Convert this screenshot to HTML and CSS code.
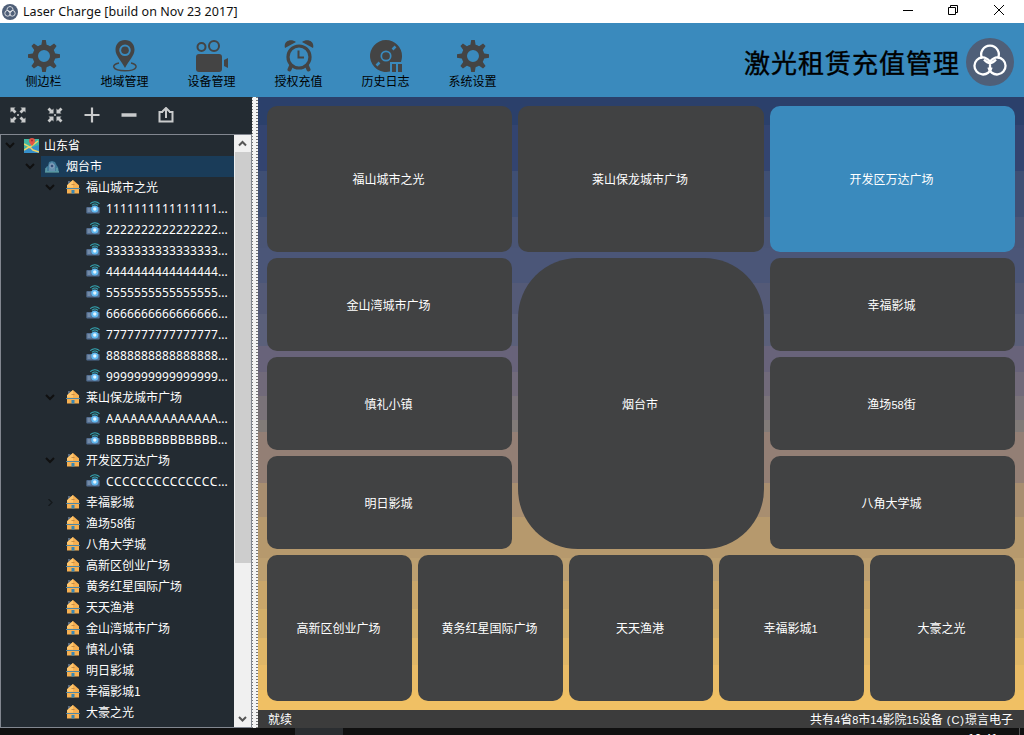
FILE: index.html
```html
<!DOCTYPE html>
<html lang="zh-CN">
<head>
<meta charset="utf-8">
<title>Laser Charge</title>
<link rel="stylesheet" href="styles.css">
</head>
<body>
<svg class="defs" width="0" height="0">
  <symbol id="logo" viewBox="0 0 48 48">
    <circle cx="24" cy="24" r="24" fill="#4f5f78"/>
    <g fill="none" stroke="#fff" stroke-width="2.3">
      <path d="M16.200 20.500A8.800 8.800 0 1 1 31.800 20.500"/>
      <path d="M25.500 29.500A8.600 8.600 0 1 1 16.500 19.300Q20 19 24 23.500"/>
      <path d="M22.500 29.500A8.600 8.600 0 1 0 31.500 19.300Q28 19 24 23.500"/>
      <path d="M18 21.500Q21 25 24 25t6-3.500M24 23v7"/>
    </g>
  </symbol>
  <symbol id="gear" viewBox="0 0 32 32">
    <g fill="#444">
      <g id="teeth"><path d="M14.200 0h3.600l1 6h-5.600zM14.200 32h3.600l1-6h-5.600z"/><path d="M0 14.200v3.600l6 1v-5.600zM32 14.200v3.600l-6 1v-5.600z"/></g>
      <use href="#teeth" transform="rotate(45 16 16)"/>
    </g>
    <circle cx="16" cy="16" r="8.700" fill="none" stroke="#444" stroke-width="5.400"/>
  </symbol>
  <symbol id="house" viewBox="0 0 14 14">
    <path d="M2 1h2.500v4H2z" fill="#596b80"/>
    <path d="M7 0l6 5.200v8.300H1V5.200z" fill="#f6b052"/>
    <path d="M7 0L1 5.200v2.300h6z" fill="#ffc66d"/>
    <path d="M0 8.500h14" stroke="#4e86a5" stroke-width="1"/>
    <path d="M5.500 4.500h3" stroke="#b98243" stroke-width=".8"/>
    <path d="M5.500 10h3v3.500h-3z" fill="#3987b5"/>
  </symbol>
  <symbol id="device" viewBox="0 0 14 14">
    <path d="M4.200 2.600Q9 -1.200 13.500 2.600M5.900 4.300Q9 1.700 12 4.300" fill="none" stroke="#35a9b6" stroke-width="1.1"/>
    <rect x=".3" y="6" width="13.400" height="6.500" rx="1" fill="#536e91"/>
    <path d="M1.500 8h3M1.500 10h3" stroke="#a7b8ca" stroke-width=".8"/>
    <circle cx="8.800" cy="8" r="3.600" fill="#61baf2"/><circle cx="8.800" cy="8" r="1.700" fill="#e1f5ff"/>
  </symbol>
  <symbol id="down" viewBox="0 0 10 7"><path d="M1 1l4 4 4-4" fill="none" stroke="#101010" stroke-width="2"/></symbol>
</svg>

<header class="titlebar">
  <svg class="app-icon"><use href="#logo"/></svg>
  <span class="caption">Laser Charge [build on Nov 23 2017]</span>
  <svg class="window-buttons" viewBox="0 0 104 14" fill="none" stroke="#000">
    <path d="M0 7.500h10M45.500 4.500h7v7h-7zM47.500 4.500v-2h7v7h-2M91 2l10 10M101 2l-10 10"/>
  </svg>
</header>

<nav class="toolbar">
  <div class="tools">
    <div class="tool"><svg viewBox="0 0 32 32"><use href="#gear"/></svg><span>侧边栏</span></div>
    <div class="tool"><svg viewBox="0 0 32 32"><path fill="#444" fill-rule="evenodd" d="M16 0C10.300 0 6.500 4.200 6.500 9.700c0 6 6 11.300 9.500 18.300 3.500-7 9.500-12.300 9.500-18.300C25.500 4.200 21.700 0 16 0zm0 4.500a5.800 5.800 0 1 1 0 11.600 5.800 5.800 0 0 1 0-11.600z"/><circle cx="16" cy="10.200" r="3.800" fill="#444"/><path d="M10 23C1.500 24.500 3 30.800 16 30.800s14-6.300 6-7.800" fill="none" stroke="#444" stroke-width="1.500"/></svg><span>地域管理</span></div>
    <div class="tool"><svg viewBox="0 0 32 32"><g fill="none" stroke="#444" stroke-width="2"><circle cx="5.500" cy="7" r="4"/><circle cx="18" cy="6" r="5"/></g><rect y="14" width="26" height="18" rx="3" fill="#444"/><path d="M28 20l4-2v10l-4-2z" fill="#444"/></svg><span>设备管理</span></div>
    <div class="tool"><svg viewBox="0 0 32 32"><path d="M2 8C0 1 8-2 13 2zM30 8C32 1 24-2 19 2z" fill="#444"/><circle cx="16" cy="17" r="11" fill="none" stroke="#444" stroke-width="3.200"/><path d="M15.500 10.500v7h5.500" fill="none" stroke="#444" stroke-width="2"/><path d="M8 26l-1.500 3.500M24 26l1.500 3.500" stroke="#444" stroke-width="4" stroke-linecap="round"/></svg><span>授权充值</span></div>
    <div class="tool"><svg viewBox="0 0 32 32"><path d="M16 0a16 16 0 1 0 4 31.500V22h11a16 16 0 0 0 1-6A16 16 0 0 0 16 0z" fill="#444"/><circle cx="16" cy="16" r="4.700" fill="#444" stroke="#3a8abd" stroke-width="1.700"/><path d="M22.500 9.500l3-3M6.500 25.500l3-3" stroke="#3a8abd" stroke-width="2.500"/><path d="M22 24h4v8h-4zM28 24h4v8h-4z" fill="#444"/></svg><span>历史日志</span></div>
    <div class="tool"><svg viewBox="0 0 32 32"><use href="#gear"/></svg><span>系统设置</span></div>
  </div>
  <h1 class="brand">激光租赁充值管理</h1>
  <svg class="brand-logo"><use href="#logo"/></svg>
</nav>

<div class="workspace">
  <aside class="sidebar">
    <div class="actions">
      <svg viewBox="0 0 16 16"><g fill="#c9cbcc"><path d="M.5.500h5L4 2l2.500 2.500-2 2L2 4 .5 5.500zM15.500.500v5L14 4l-2.500 2.500-2-2L12 2 10.500.500zM.5 15.500v-5L2 12l2.500-2.500 2 2L4 14l1.500 1.500zM15.500 15.500h-5L12 14l-2.500-2.500 2-2L14 12l1.500-1.500z"/><circle cx="8" cy="8" r="1"/></g></svg>
      <svg viewBox="0 0 16 16"><g fill="#c9cbcc"><path d="M6.500 6.500h-5L3 5 .5 2.500l2-2L5 3l1.500-1.500zM9.500 6.500v-5L11 3 13.500.500l2 2L13 5l1.500 1.500zM6.500 9.500v5L5 13l-2.500 2.500-2-2L3 11 1.500 9.500zM9.500 9.500h5L13 11l2.500 2.500-2 2L11 13l-1.500 1.500z"/><circle cx="8" cy="8" r="1"/></g></svg>
      <svg viewBox="0 0 16 16"><path d="M8 .5v15M.5 8h15" stroke="#c9cbcc" stroke-width="2.200"/></svg>
      <svg viewBox="0 0 16 16"><path d="M.5 8h15" stroke="#c9cbcc" stroke-width="3.500"/></svg>
      <svg viewBox="0 0 16 16" fill="none" stroke="#c9cbcc" stroke-width="2"><path d="M5 5H1.500v9.500h13V5H11M8 11V2M4.500 4.500L8 1l3.500 3.500"/></svg>
    </div>
    <div class="tree-frame">
      <div class="tree">
        <div class="row province"><svg class="arrow"><use href="#down"/></svg><svg class="map-icon" viewBox="0 0 15 15"><path d="M0 1h15v14H0z" fill="#42b6a0"/><path d="M0 11l5-1 10-3v8H0z" fill="#368fca"/><path d="M0 6l6 3 3 3 6 2M5 10l9-7M0 12l5-3" fill="none" stroke="#efd466" stroke-width="1.500"/><path d="M8 8C3 3 5 0 8 0s5 3 0 8z" fill="#e45445"/><circle cx="8" cy="2.500" r="1" fill="#a42e32"/></svg><span>山东省</span></div>
        <div class="row city"><svg class="arrow"><use href="#down"/></svg><div class="selection"><svg class="city-icon" viewBox="0 0 14 12"><path d="M0 11l1-5 2-1 1-4 3-1 3 1 2 4 1 1 1 5z" fill="#417b9b"/><path d="M4 3l3-2 3 3v6H4z" fill="#6690ae"/><circle cx="7" cy="5" r="2" fill="#354f79" stroke="#90a9c4"/><path d="M1 7v3M12 7v3M0 11h14" stroke="#6eb2ae"/></svg><span>烟台市</span></div></div>
        <div class="row site"><svg class="arrow"><use href="#down"/></svg><svg class="icon"><use href="#house"/></svg><span>福山城市之光</span></div>
        <div class="row device"><svg class="icon"><use href="#device"/></svg><span class="digits">1111111111111111</span><span>...</span></div>
        <div class="row device"><svg class="icon"><use href="#device"/></svg><span class="digits">2222222222222222</span><span>...</span></div>
        <div class="row device"><svg class="icon"><use href="#device"/></svg><span class="digits">3333333333333333</span><span>...</span></div>
        <div class="row device"><svg class="icon"><use href="#device"/></svg><span class="digits">4444444444444444</span><span>...</span></div>
        <div class="row device"><svg class="icon"><use href="#device"/></svg><span class="digits">5555555555555555</span><span>...</span></div>
        <div class="row device"><svg class="icon"><use href="#device"/></svg><span class="digits">6666666666666666</span><span>...</span></div>
        <div class="row device"><svg class="icon"><use href="#device"/></svg><span class="digits">7777777777777777</span><span>...</span></div>
        <div class="row device"><svg class="icon"><use href="#device"/></svg><span class="digits">8888888888888888</span><span>...</span></div>
        <div class="row device"><svg class="icon"><use href="#device"/></svg><span class="digits">9999999999999999</span><span>...</span></div>
        <div class="row site"><svg class="arrow"><use href="#down"/></svg><svg class="icon"><use href="#house"/></svg><span>莱山保龙城市广场</span></div>
        <div class="row device"><svg class="icon"><use href="#device"/></svg><span class="letters-a">AAAAAAAAAAAAAA</span><span>...</span></div>
        <div class="row device"><svg class="icon"><use href="#device"/></svg><span class="letters-b">BBBBBBBBBBBBBB</span><span>...</span></div>
        <div class="row site"><svg class="arrow"><use href="#down"/></svg><svg class="icon"><use href="#house"/></svg><span>开发区万达广场</span></div>
        <div class="row device"><svg class="icon"><use href="#device"/></svg><span class="letters-c">CCCCCCCCCCCCCC</span><span>...</span></div>
        <div class="row site"><svg class="arrow" viewBox="0 0 10 7"><path d="M3.500 0L7 3.500 3.500 7" fill="none" stroke="#15191c" stroke-width="1.300"/></svg><svg class="icon"><use href="#house"/></svg><span>幸福影城</span></div>
        <div class="row site"><i class="arrow"></i><svg class="icon"><use href="#house"/></svg><span>渔场58街</span></div>
        <div class="row site"><i class="arrow"></i><svg class="icon"><use href="#house"/></svg><span>八角大学城</span></div>
        <div class="row site"><i class="arrow"></i><svg class="icon"><use href="#house"/></svg><span>高新区创业广场</span></div>
        <div class="row site"><i class="arrow"></i><svg class="icon"><use href="#house"/></svg><span>黄务红星国际广场</span></div>
        <div class="row site"><i class="arrow"></i><svg class="icon"><use href="#house"/></svg><span>天天渔港</span></div>
        <div class="row site"><i class="arrow"></i><svg class="icon"><use href="#house"/></svg><span>金山湾城市广场</span></div>
        <div class="row site"><i class="arrow"></i><svg class="icon"><use href="#house"/></svg><span>慎礼小镇</span></div>
        <div class="row site"><i class="arrow"></i><svg class="icon"><use href="#house"/></svg><span>明日影城</span></div>
        <div class="row site"><i class="arrow"></i><svg class="icon"><use href="#house"/></svg><span>幸福影城1</span></div>
        <div class="row site"><i class="arrow"></i><svg class="icon"><use href="#house"/></svg><span>大豪之光</span></div>
      </div>
      <div class="scrollbar">
        <svg viewBox="0 0 17 17"><path d="M5 10.500L8.500 7l3.500 3.500" fill="none" stroke="#555" stroke-width="2"/></svg>
        <div class="thumb"></div>
        <svg class="scroll-down" viewBox="0 0 17 17"><path d="M5 7l3.500 3.500L12 7" fill="none" stroke="#555" stroke-width="2"/></svg>
      </div>
    </div>
  </aside>
  <div class="splitter"></div>
  <main class="content">
    <div class="board">
      <div class="sites">
        <div class="tile">福山城市之光</div><div class="tile">莱山保龙城市广场</div><div class="tile active">开发区万达广场</div>
        <div class="tile">金山湾城市广场</div><div class="tile center">烟台市</div><div class="tile">幸福影城</div>
        <div class="tile">慎礼小镇</div><div class="tile"><span>渔场<b>58</b>街</span></div>
        <div class="tile">明日影城</div><div class="tile">八角大学城</div>
      </div>
      <div class="sites-bottom">
        <div class="tile">高新区创业广场</div><div class="tile">黄务红星国际广场</div><div class="tile">天天渔港</div><div class="tile"><span>幸福影城<b>1</b></span></div><div class="tile">大豪之光</div>
      </div>
    </div>
    <footer class="status"><span>就续</span><span>共有<b>4</b>省<b>8</b>市<b>14</b>影院<b>15</b>设备<b class="mark"> (C)</b>璟言电子</span></footer>
  </main>
</div>
<div class="taskbar"><div class="task"></div><div class="clock">10:41</div><div class="edge"></div></div>
</body>
</html>
```
FILE: styles.css
```css
* { box-sizing: border-box; }
body { margin: 0; width: 1024px; height: 735px; overflow: hidden; display: flex; flex-direction: column; font: 12px/21px "Noto Sans CJK SC", "Noto Sans", sans-serif; background: #101010; }
svg { display: block; flex: none; }
.defs { display: none; }

.titlebar { height: 23px; flex: none; display: flex; align-items: center; background: #fff; padding: 0 21px 0 2px; }
.app-icon { width: 16px; height: 16px; }
.caption { margin-left: 5px; font: 12.5px/22px "Noto Sans", sans-serif; color: #111; letter-spacing: .05px; white-space: pre; }
.window-buttons { width: 104px; height: 14px; margin: -3px -4px 0 auto; }

.toolbar { height: 74px; flex: none; display: flex; background: #3a8abd; color: #000; }
.tools { display: flex; }
.tool { width: 87px; padding-top: 17px; display: flex; flex-direction: column; align-items: center; }
.tool:first-child { width: 81px; padding-left: 6px; }
.tool svg { width: 32px; height: 32px; }
.tool span { line-height: 18px; }
.brand { margin: 23px 6px 0 auto; font-size: 26px; line-height: 32px; letter-spacing: 1px; font-weight: 400; -webkit-text-stroke: .4px #000; }
.brand-logo { width: 48px; height: 48px; margin: 15px 10px 0 0; }

.workspace { height: 631px; flex: none; display: flex; }
.sidebar { width: 252px; background: #232b32; display: flex; flex-direction: column; }
.actions { height: 37px; display: flex; gap: 21px; padding: 10px 0 0 10px; }
.actions svg { width: 16px; height: 16px; }
.tree-frame { height: 594px; border: 1px solid #828790; display: flex; }
.tree { width: 233px; color: #fff; }
.row { height: 21px; display: flex; align-items: center; white-space: nowrap; }
.row span { line-height: 19px; padding-bottom: 2px; }
.arrow { width: 10px; height: 7px; flex: none; margin-right: 10px; }
.icon { width: 14px; height: 14px; margin: -1px 6px 0 0; }
.province { padding-left: 4px; }
.province .arrow { margin-right: 9px; }
.map-icon { width: 15px; height: 15px; margin-right: 5px; }
.city { padding-left: 24px; }
.city .arrow { margin-right: 6px; }
.selection { flex: 1; height: 21px; display: flex; align-items: center; background: #1a3c59; padding-left: 4px; }
.city-icon { width: 14px; height: 12px; margin-right: 7px; }
.site { padding-left: 44px; }
.site .icon { margin-left: 1px; }
.site .arrow { margin-top: -1px; }
.device { padding-left: 85px; font-family: "Noto Sans", sans-serif; }
.device .icon { margin-top: -2px; }
.device span { padding-bottom: 0; }
.digits { letter-spacing: .14px; }
.letters-a { letter-spacing: .33px; }
.letters-b { letter-spacing: .18px; }
.letters-c { letter-spacing: .64px; }
.scrollbar { width: 17px; display: flex; flex-direction: column; background: #f0f0f0; }
.scrollbar svg { width: 17px; height: 17px; }
.thumb { height: 411px; background: #cdcdcd; margin-left: 1px; }
.scroll-down { margin-top: auto; }
.splitter { width: 6px; background: repeating-linear-gradient(#777 0 1px, #f4f4f4 1px 3px) 0 0 / 1px 100% no-repeat, repeating-linear-gradient(#777 0 1px, #f4f4f4 1px 3px) 100% 0 / 2px 100% no-repeat, #f4f4f4; }

.content { width: 766px; display: flex; flex-direction: column; }
.board { height: 613px; padding: 9px; display: flex; flex-direction: column; gap: 6px;
  background: linear-gradient(#2b406b 28px, #334470 28px 74px, #3f4f74 74px 120px, #4a5576 120px 151px, #4b5678 151px 186px, #545a77 186px 217px, #5b607a 217px 249px, #68637a 249px 275px, #716a7a 275px 299px, #7a7379 299px 323px, #817b78 323px 335px, #937f75 335px 386px, #a88e70 386px 420px, #b6996d 420px 461px, #bc9f70 461px 484px, #c9a66a 484px 512px, #d2ae69 512px 541px, #dfb667 541px 568px, #e8bb66 568px 593px, #f0c064 593px); }
.sites { display: grid; grid-template-columns: 245px 246px 245px; grid-template-rows: 146px 93px 93px 93px; gap: 6px; }
.sites-bottom { display: grid; grid-template-columns: 145px 145px 144px 145px 145px; gap: 6px; height: 146px; }
.tile { display: flex; align-items: center; justify-content: center; border-radius: 10px; background: #414243; color: #fff; padding: 0 2px 1px 0; }
.tile.active { background: #3a8abd; }
.tile.center { grid-column: 2; grid-row: 2 / 5; border-radius: 60px; }
.tile b, .status b { font-family: "Liberation Sans", sans-serif; font-size: 11px; line-height: 0; font-weight: 400; white-space: pre; }
.status .mark { letter-spacing: .95px; }
.status { height: 18px; padding: 0 11px 0 10px; display: flex; justify-content: space-between; background: #3c3c3c; color: #fff; line-height: 18px; }

.taskbar { height: 7px; display: flex; overflow: hidden; background: #101010; }
.task { margin-left: 295px; width: 48px; background: #2b2e31; }
.clock { margin-left: 625px; padding-top: 2px; width: 51px; color: #fff; line-height: 16px; }
.edge { width: 1px; background: #555; }
```
